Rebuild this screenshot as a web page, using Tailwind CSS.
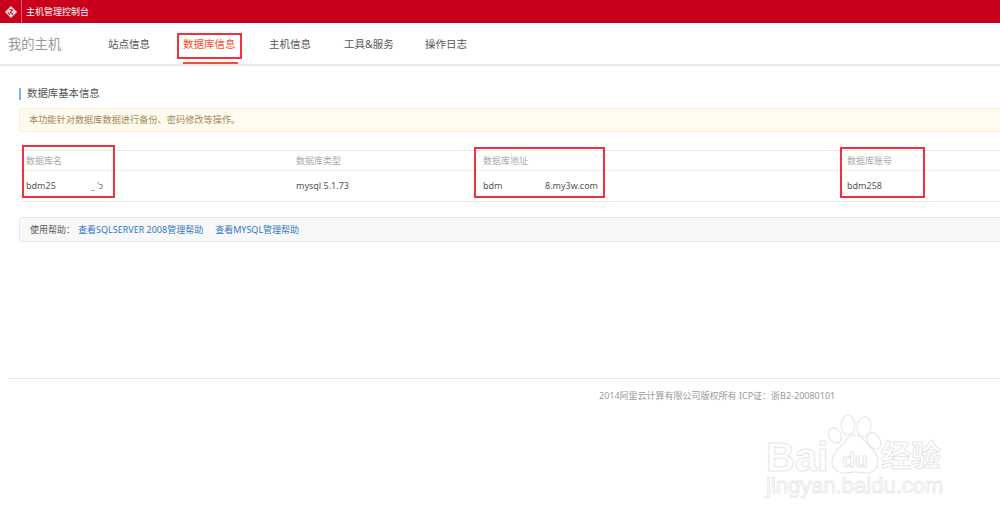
<!doctype html>
<html lang="zh">
<head>
    <meta charset="utf-8"/>
    <title>主机管理控制台</title>
    <script src="https://cdn.jsdelivr.net/npm/@tailwindcss/browser@4"></script>
</head>
<body class="relative h-[522px] w-[1000px] overflow-hidden bg-white font-['Noto_Sans','Noto_Sans_CJK_SC',sans-serif] text-[#555]">

<!-- top bar -->
<header class="flex h-[23px] items-center bg-[#c8001c] text-white">
    <div class="flex h-full w-[22px] items-center justify-center border-r border-[#e0606f]">
        <svg width="14" height="14" viewBox="0 0 14 14">
            <path d="M7 1.500 L12.500 7 L7 12.500 L1.500 7 Z" fill="#f8dfe2" stroke="#f8dfe2" stroke-linejoin="round"/>
            <path d="M5.500 4.500 L8.500 5 L6.500 7.500 L9 9.500 M4 7.500 L6 10" fill="none" stroke="#c8001c" stroke-width="1.100"/>
        </svg>
    </div>
    <span class="ml-[4px] text-[9px]">主机管理控制台</span>
</header>

<!-- nav -->
<nav class="flex h-[43px] items-center border-b-2 border-[#e8e8e8] pt-[2px]">
    <span class="ml-2 w-[100px] text-[13.300px] text-[#999]">我的主机</span>
    <ul class="flex h-full items-center text-[10.500px] text-[#555]">
        <li class="w-[75px]">站点信息</li>
        <li class="relative flex h-full w-[86px] items-center text-[#f0502d]">
            数据库信息
            <span class="absolute bottom-0 left-0 h-[2px] w-[55px] bg-[#f0502d]"></span>
        </li>
        <li class="w-[75px]">主机信息</li>
        <li class="w-[81px]">工具&amp;服务</li>
        <li>操作日志</li>
    </ul>
</nav>

<main class="ml-[19px] w-[1000px]">
    <h2 class="mt-[22px] flex h-[12px] items-center border-l-2 border-[#7db4e6] pl-[6px] text-[10.400px] text-[#555]">数据库基本信息</h2>
    <div class="mt-[8px] flex h-[24px] items-center rounded-[3px] border border-[#faeecb] bg-[#fffbee] pl-[9px] text-[9.200px] text-[#a08a5a]">本功能针对数据库数据进行备份、密码修改等操作。</div>

    <table class="mt-[18px] w-[981px] table-fixed border-y border-[#e8e8e8] text-[9px]">
        <thead>
            <tr class="h-[20px] border-b border-[#eeeeee] text-[#aaa]">
                <th class="w-[277px] pl-[7px] text-left font-normal">数据库名</th>
                <th class="w-[187px] pl-0 text-left font-normal">数据库类型</th>
                <th class="w-[364px] text-left font-normal">数据库地址</th>
                <th class="text-left font-normal">数据库账号</th>
            </tr>
        </thead>
        <tbody>
            <tr class="h-[31px] text-[#555]">
                <td class="pl-[7px]"><span class="inline-block w-[65px]">bdm25</span><span class="text-[#777]">_ ˈɔ</span></td>
                <td>mysql 5.1.73</td>
                <td><span class="inline-block w-[62px]">bdm</span>8.my3w.com</td>
                <td>bdm258</td>
            </tr>
        </tbody>
    </table>

    <div class="mt-[15px] flex h-[25px] items-center rounded-[3px] border border-[#e8e8e8] bg-[#f8f8f8] pl-[10px] text-[9px]">
        <span class="w-[48px]">使用帮助：</span>
        <a class="text-[#2f77c9]">查看SQLSERVER 2008管理帮助</a>
        <a class="ml-[12px] text-[#2f77c9]">查看MYSQL管理帮助</a>
    </div>
</main>

<footer class="ml-2 mt-[136px] h-[40px] border-t border-[#e8e8e8] pl-[591px] pt-[10px] text-[9px] text-[#999]">2014阿里云计算有限公司版权所有 ICP证：浙B2-20080101</footer>

<!-- red annotation boxes drawn over the screenshot -->
<div class="absolute left-[177px] top-[33px] h-[26px] w-[65px] border-2 border-[#f0303a]"></div>
<div class="absolute left-[22px] top-[145px] h-[53px] w-[93px] border-2 border-[#f0303a]"></div>
<div class="absolute left-[474px] top-[147px] h-[51px] w-[131px] border-2 border-[#f0303a]"></div>
<div class="absolute left-[840px] top-[147px] h-[51px] w-[85px] border-2 border-[#f0303a]"></div>

<!-- watermark -->
<div class="absolute left-[764px] top-[412px] h-[90px] w-[200px] font-['Liberation_Sans','Noto_Sans_CJK_SC',sans-serif]">
    <svg class="absolute left-[62px] top-0" width="60" height="64" viewBox="0 0 60 64" fill="white" stroke="#e6e6e6" stroke-width="1.200">
        <ellipse cx="9" cy="23.500" rx="6" ry="8" transform="rotate(-25 9 23.500)"/>
        <ellipse cx="22" cy="13" rx="7" ry="10"/>
        <ellipse cx="38" cy="15" rx="7" ry="10" transform="rotate(8 38 15)"/>
        <ellipse cx="48" cy="29" rx="6" ry="9" transform="rotate(-30 48 29)"/>
        <path d="M29 23 C22 23 19 30 14 35 C8 40 6 46 6 50 C6 57 12 61 19 61 C24 61 26 60 29 60 C33 60 35 61 40 61 C47 61 52 57 52 50 C52 45 50 40 44 35 C39 30 36 23 29 23 Z"/>
    </svg>
    <span class="absolute left-[2px] top-[30px] text-[40px] font-bold leading-[30px] text-transparent [-webkit-text-stroke:1px_#e6e6e6]">Bai</span>
    <span class="absolute left-[78px] top-[36px] text-[21px] font-bold leading-[24px] text-transparent [-webkit-text-stroke:1px_#e6e6e6]">du</span>
    <span class="absolute left-[117px] top-[27px] text-[30px] font-bold leading-[34px] text-transparent [-webkit-text-stroke:1px_#e6e6e6]">经验</span>
    <span class="absolute left-[2px] top-[63px] text-[22px] leading-[22px] text-transparent [-webkit-text-stroke:1px_#eaeaea]">jingyan.baidu.com</span>
</div>

</body>
</html>
